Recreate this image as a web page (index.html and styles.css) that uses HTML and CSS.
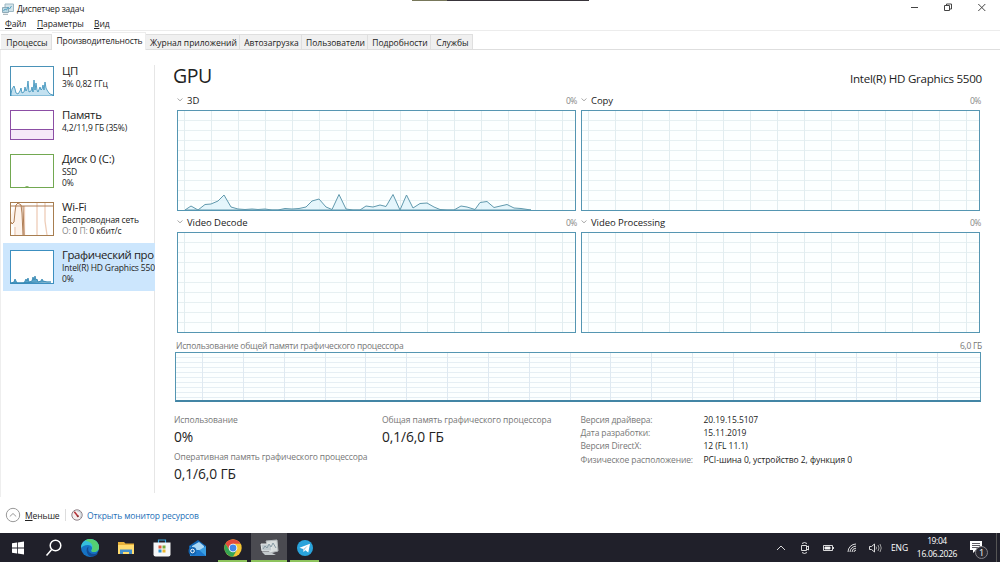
FILE: index.html
```html
<!DOCTYPE html>
<html lang="ru">

<head>
    <meta charset="UTF-8">
    <meta name="viewport" content="width=device-width, initial-scale=1.0">
    <title>Диспетчер задач</title>
    <link rel="stylesheet" href="styles.css">
</head>

<body>
    <div class="window">
        <div class="top_strip"></div>
        <div class="title_bar">
            <svg class="app_icon" viewBox="0 0 12 12">
                <path d="M3 1h8.500v7.500h-8.500z" fill="#d5e4ea" stroke="#9db8c4" />
                <path d="M.5 4.500h6v5h-6z" fill="#bcd9e4" stroke="#8fabb8" />
                <path d="M1.500 8l1.500-2 1.500 1 1.500-3 1.500 2 2-3" fill="none" stroke="#5ba5c4" />
                <path d="M1 11.300h5" stroke="#9aa9b0" />
            </svg>
            <span class="title">Диспетчер задач</span>
            <svg class="win_buttons" viewBox="0 0 80 12">
                <path d="M4 6.500h7" />
                <path d="M37.500 4.500h5v5h-5zM39.500 4.500v-1.500h5v5h-2" />
                <path d="M71.300 3l7 7M78.300 3l-7 7" />
            </svg>
        </div>
        <div class="menu_bar">
            <span class="menu_file"><u>Ф</u>айл</span>
            <span class="menu_options"><u>П</u>араметры</span>
            <span class="menu_view"><u>В</u>ид</span>
        </div>
        <div class="tabs">
            <div class="tab tab_processes">Процессы</div>
            <div class="tab tab_performance active">Производительность</div>
            <div class="tab tab_history">Журнал приложений</div>
            <div class="tab tab_startup">Автозагрузка</div>
            <div class="tab tab_users">Пользователи</div>
            <div class="tab tab_details">Подробности</div>
            <div class="tab tab_services">Службы</div>
        </div>

        <div class="content">
            <div class="sidebar">
                <div class="item">
                    <svg class="thumb short" viewBox="0 0 44 30">
                        <rect x=".5" y=".5" width="43" height="29" fill="#fff" stroke="#4a92b8" />
                        <path d="M1 28l1-5 2-3 1 3 1 4 2 1 2-3 1-3 1 5 2-1 1-5 1 4 1-2 1-8 1 11 2-1 1-4 1 5 1-12 1 10 1-7 1 7 1 2 2-5 1 3 1-1 1-4 1 5 1-8 1 6 1 2 2 3 1 1 3 1v1h-42z" fill="#c3e1f0" stroke="#318cb7" stroke-width=".8" />
                    </svg>
                    <div class="item_text">
                        <h3>ЦП</h3>
                        <p>3% 0,82 ГГц</p>
                    </div>
                </div>
                <div class="item">
                    <svg class="thumb short" viewBox="0 0 44 30">
                        <rect x=".5" y=".5" width="43" height="29" fill="#fff" stroke="#8c4ea5" />
                        <path d="M1 19.500h42v9.500h-42z" fill="#f5e9f8" />
                        <path d="M1 19.500h42" stroke="#8c4ea5" />
                    </svg>
                    <div class="item_text">
                        <h3>Память</h3>
                        <p>4,2/11,9 ГБ (35%)</p>
                    </div>
                </div>
                <div class="item tall">
                    <svg class="thumb" viewBox="0 0 44 34">
                        <rect x=".5" y=".5" width="43" height="33" fill="#fff" stroke="#72a851" />
                        <path d="M15 33.300l2-.8 2 .8" stroke="#72a851" fill="none" />
                    </svg>
                    <div class="item_text">
                        <h3>Диск 0 (C:)</h3>
                        <p>SSD</p>
                        <p>0%</p>
                    </div>
                </div>
                <div class="item tall network">
                    <svg class="thumb" viewBox="0 0 44 34">
                        <rect x=".5" y=".5" width="43" height="33" fill="#fff" stroke="#a77d50" />
                        <path d="M1 21V13l4-9 2-2h5l1 31H4V24z" fill="#fdf3ec" />
                        <path d="M14.500 4v29M27 1v32M35 1v18l2 14M5 25v8" fill="none" stroke="#eecdb8" stroke-width="1.300" />
                        <path d="M1 20l1 2 2-2 1-10 1-7 2-2 3 2 1 8 1 22M1 4h42M13 4l1 29" fill="none" stroke="#a66f43" stroke-width=".9" />
                    </svg>
                    <div class="item_text">
                        <h3>Wi-Fi</h3>
                        <p>Беспроводная сеть</p>
                        <p class="rates"><span>О:</span> 0 <span>П:</span> 0 кбит/с</p>
                    </div>
                </div>
                <div class="item tall selected">
                    <svg class="thumb" viewBox="0 0 44 34">
                        <rect x=".5" y=".5" width="43" height="33" fill="#fff" stroke="#3c8fc0" />
                        <path d="M1 33l3-1 1-3 1 2 1 2h7l2-4 1 2 1-3 1 4 3-1 1-4 1 3 1-4 1 4 1-1 1 3 3-1 1-2 1 2 4 1h4z" fill="#5aa4ca" stroke="#2d83ae" stroke-width=".8" />
                    </svg>
                    <div class="item_text">
                        <h3>Графический про</h3>
                        <p>Intel(R) HD Graphics 5500</p>
                        <p>0%</p>
                    </div>
                </div>
            </div>

            <div class="main">
                <div class="heading">
                    <h1>GPU</h1>
                    <span class="model">Intel(R) HD Graphics 5500</span>
                </div>
                <div class="engines">
                    <div class="engine">
                        <div class="engine_head">
                            <svg class="chevron" viewBox="0 0 6 4"><path d="M.5 .5l2.500 2.300 2.500-2.300" /></svg>
                            <span class="engine_name">3D</span><span class="percent">0%</span>
                        </div>
                        <div class="graph">
                            <svg class="graph_line" viewBox="0 0 397 99">
                                <path d="M7 99l6-4 7 4 7-5.500 6-.5 7-3 6-6 7 12 7 2 7 .5 7-.5 6 .5 7-.5 7 1h6l7-1.500 7 .5 7-.5 7-1.500 6-6 7-2 7 8 6 2.500 7-15 7 14.500 7 1h7l6-4 7 1 7-2 6 1.500 7-12 7 15.500 6.500-15 6.500 13 7-4.500 7-.5 7 4 6 2.500 7 .5h7l7-4 6 1 8 2.500 5-7 7-1 7 6 13-3 7 3.500 7 .5 10 1.500z" />
                            </svg>
                        </div>
                    </div>
                    <div class="engine">
                        <div class="engine_head">
                            <svg class="chevron" viewBox="0 0 6 4"><path d="M.5 .5l2.500 2.300 2.500-2.300" /></svg>
                            <span class="engine_name">Copy</span><span class="percent">0%</span>
                        </div>
                        <div class="graph"></div>
                    </div>
                    <div class="engine">
                        <div class="engine_head">
                            <svg class="chevron" viewBox="0 0 6 4"><path d="M.5 .5l2.500 2.300 2.500-2.300" /></svg>
                            <span class="engine_name">Video Decode</span><span class="percent">0%</span>
                        </div>
                        <div class="graph"></div>
                    </div>
                    <div class="engine">
                        <div class="engine_head">
                            <svg class="chevron" viewBox="0 0 6 4"><path d="M.5 .5l2.500 2.300 2.500-2.300" /></svg>
                            <span class="engine_name">Video Processing</span><span class="percent">0%</span>
                        </div>
                        <div class="graph"></div>
                    </div>
                </div>
                <div class="memory_head">
                    <span class="label memory_label">Использование общей памяти графического процессора</span>
                    <span class="label memory_max">6,0 ГБ</span>
                </div>
                <div class="memory_graph"></div>
                <div class="stats">
                    <div class="stats_left">
                        <div class="label">Использование</div>
                        <div class="value">0%</div>
                        <div class="label">Оперативная память графического процессора</div>
                        <div class="value">0,1/6,0 ГБ</div>
                    </div>
                    <div class="stats_mid">
                        <div class="label shared_label">Общая память графического процессора</div>
                        <div class="value">0,1/6,0 ГБ</div>
                    </div>
                    <div class="details">
                        <span class="label">Версия драйвера:</span><span>20.19.15.5107</span>
                        <span class="label">Дата разработки:</span><span>15.11.2019</span>
                        <span class="label">Версия DirectX:</span><span>12 (FL 11.1)</span>
                        <span class="label">Физическое расположение:</span><span>PCI-шина 0, устройство 2, функция 0</span>
                    </div>
                </div>
            </div>
        </div>

        <div class="footer">
            <svg class="less_icon" viewBox="0 0 16 16">
                <circle cx="8" cy="8" r="6.700" />
                <path d="M4.800 9.500l3.200-3 3.200 3" />
            </svg>
            <span class="less"><u>М</u>еньше</span>
            <span class="divider"></span>
            <svg class="monitor_icon" viewBox="0 0 12 12">
                <circle cx="6" cy="6" r="5.200" fill="#f5eeee" stroke="#8c7f86" />
                <path d="M6 1.800a4.200 4.200 0 0 1 3 7.200" fill="none" stroke="#b9c6ce" />
                <path d="M3.300 2.800l4 5" stroke="#b52f35" stroke-width="1.500" />
                <circle cx="6.800" cy="7.300" r="1" fill="#8c3438" />
            </svg>
            <a class="monitor_link">Открыть монитор ресурсов</a>
        </div>
    </div>

    <div class="taskbar">
        <div class="task">
            <svg viewBox="0 0 20 20"><path d="M4 5.300l5-.7v5H4zM9.800 4.500l6.200-.9v6H9.800zM4 10.400h5v5l-5-.7zM9.800 10.400H16v6l-6.200-.9z" fill="#fff" /></svg>
        </div>
        <div class="task search">
            <svg viewBox="0 0 20 20" fill="none" stroke="#fff" stroke-width="1.500"><circle cx="11.500" cy="7.500" r="5.300" /><path d="M7.700 11.500L2.500 17.500" /></svg>
        </div>
        <div class="task">
            <svg viewBox="0 0 20 20">
                <circle cx="10" cy="10" r="9" fill="#1673c5" />
                <path d="M1 10C1 4.500 5 1 10 1c5.500 0 9 4 9 8 0 3.500-2.500 5-5 5-2 0-3-.8-2.500-1.800C13 10 11.500 7 8 7c-3.500 0-6 1.500-7 3z" fill="#35bedb" />
                <path d="M10 1c5.500 0 9 4 9 8 0 3.500-2.500 5-5 5-2 0-3-.8-2.500-1.800C14 8 12 3.500 5 2.700 6.500 1.500 8 1 10 1z" fill="#55cf72" />
                <path d="M8.500 8.500C5 10.500 6.500 18 12 18.800 15 18.500 17 17 18 15c-4 2-9.500.8-9.800-3.500 0-1.500.3-2 .3-3z" fill="#124b93" />
            </svg>
        </div>
        <div class="task">
            <svg viewBox="0 0 20 20">
                <path d="M2 4h6l1.500 1.500H18V16H2z" fill="#e8b23b" />
                <path d="M2 7h16v9H2z" fill="#ffdc70" />
                <path d="M4 16v-4.500h12V16h-3v-2H7v2z" fill="#4590cc" />
            </svg>
        </div>
        <div class="task">
            <svg viewBox="0 0 20 20">
                <path d="M6.500 5V2h7v3" fill="none" stroke="#39a6da" stroke-width="1.200" />
                <path d="M1.500 4.500h17v12q0 2-2 2h-13q-2 0-2-2z" fill="#f5f7f8" />
                <path d="M6.500 7.500h3v3h-3z" fill="#e35a3d" /><path d="M10.500 7.500h3v3h-3z" fill="#77ad3b" />
                <path d="M6.500 11.500h3v3h-3z" fill="#2b91cd" /><path d="M10.500 11.500h3v3h-3z" fill="#ebb62c" />
            </svg>
        </div>
        <div class="task">
            <svg viewBox="0 0 20 20">
                <path d="M2 8l9-6 8 6v10H3z" fill="#1267b4" />
                <path d="M5 8l7-4 5 4v4H5z" fill="#a9d8f5" />
                <path d="M3 8l8 5 8-5v10H3z" fill="#3a9ee3" />
                <path d="M3 18l9-6 7 6z" fill="#1c78ce" />
                <circle cx="5.500" cy="13" r="4" fill="#1264b0" />
                <circle cx="5.500" cy="13" r="1.800" fill="none" stroke="#fff" />
            </svg>
        </div>
        <div class="task open">
            <svg viewBox="0 0 20 20">
                <circle cx="10" cy="10" r="8.700" fill="#f4c534" />
                <path d="M2.500 5.700A8.700 8.700 0 0 1 17.500 5.700H10L6.300 12z" fill="#e34b3d" />
                <path d="M2.500 5.700A8.700 8.700 0 0 0 10 18.700l3.700-6.500L6.300 12z" fill="#36a553" />
                <circle cx="10" cy="10" r="4.300" fill="#fff" /><circle cx="10" cy="10" r="3.400" fill="#4286e8" />
            </svg>
        </div>
        <div class="task open current">
            <svg viewBox="0 0 20 20">
                <path d="M7 3l11-1 1 11-8 2z" fill="#d8dddd" stroke="#b3b9bb" />
                <path d="M2 6h10l1 7H3z" fill="#c0c9cd" stroke="#e4e8e9" />
                <path d="M4 11l2-3 2 2 2-4 2 3 2-4 3 5" fill="none" stroke="#879ba5" />
                <path d="M3 14h8l6 3H6z" fill="#c4cacc" />
            </svg>
        </div>
        <div class="task open">
            <svg viewBox="0 0 20 20"><circle cx="10" cy="10" r="8" fill="#29a3db" /><path d="M4.500 9.800L15 5.700l-1.700 8.800-3-2.200-1.700 1.600-.5-3z" fill="#fff" /><path d="M8.100 10.900l4.900-3.500-3.500 4.300-.9 2.200z" fill="#a9cde0" /></svg>
        </div>

        <div class="tray">
            <svg class="tray_icons" viewBox="0 0 108 16">
                <path d="M3 10l4-4 4 4" />
                <path d="M27.500 5.500h5v5h-5zM32.500 7l2-1v4l-2-1M28 3.500q2.500-2 5 0M28 12.500q2.500 2 5 0" />
                <path d="M49.500 5.500h9v5h-9zM59.500 7v2" /><path d="M51 7h5v2h-5z" fill="#fff" />
                <path d="M74 12a8 8 0 0 1 8-8M76 12a6 6 0 0 1 6-5.800M78 12a4 4 0 0 1 4-3.800M80 12a2 2 0 0 1 2-1.800" />
                <path d="M95.500 6.500h2l3-2.500v8l-3-2.500h-2z" /><path d="M102 6.500q1 1.500 0 3M104 5q2 3 0 6M106 4q2.500 4 0 8" stroke="#aaa" />
            </svg>
            <span class="lang">ENG</span>
            <div class="clock"><span class="time">19:04</span><span class="date">16.06.2026</span></div>
            <div class="notify">
                <svg viewBox="0 0 14 14"><path d="M1 1h12v9H7l-3 3v-3H1z" fill="#fff" /><path d="M3 3.500h8M3 5.500h8M3 7.500h6" stroke="#33313a" stroke-width=".8" /></svg>
                <span class="badge">1</span>
            </div>
        </div>
    </div>
</body>

</html>
```

FILE: styles.css
```css
* {
    margin: 0;
    padding: 0;
    box-sizing: border-box;
}

body {
    width: 1000px;
    height: 562px;
    overflow: hidden;
    background-color: white;
    font-family: "Open Sans", "Noto Sans", sans-serif;
    font-size: 8.5px;
    color: #222;
    white-space: nowrap;
}

svg {
    display: block;
    flex: none;
}

u {
    text-underline-offset: 1px;
}

.window {
    height: 533px;
    display: flex;
    flex-direction: column;
}

.top_strip {
    width: 177px;
    height: 1px;
    margin-left: 412px;
    background: linear-gradient(90deg, #77775a 35px, #38343a 35px);
}

/* title and menu */
.title_bar {
    height: 17px;
    display: flex;
    align-items: center;
    padding: 0 13px 2px 2px;
}

.app_icon {
    width: 12px;
    height: 12px;
    margin-right: 3px;
}

.title {
    letter-spacing: -0.2px;
}

.win_buttons {
    width: 80px;
    height: 12px;
    margin: -3px 0 0 auto;
    fill: none;
    stroke: #444;
}

.menu_bar {
    height: 13px;
    display: flex;
    align-items: center;
    padding: 0 0 1px 5px;
    border-bottom: 1px solid #ececec;
    letter-spacing: -0.1px;
}

.menu_file {
    width: 32px;
}

.menu_options {
    width: 57px;
}

.tabs {
    height: 19px;
    display: flex;
    align-items: flex-end;
    padding-left: 1px;
    border-bottom: 1px solid #dedede;
}

.tab {
    height: 15px;
    line-height: 15px;
    padding-left: 2px;
    text-align: center;
    background-color: #f0f0f0;
    border: 1px solid #dfdfdf;
    border-width: 1px 1px 0 0;
}

.tab.active {
    height: 18px;
    line-height: 15px;
    margin-bottom: -1px;
    background-color: white;
    border-color: #ededed;
    letter-spacing: -0.15px;
}

.tab_processes {
    width: 51px;
}

.tab_performance,
.tab_history {
    width: 94px;
}

.tab_startup {
    width: 62px;
}

.tab_users {
    width: 66px;
}

.tab_details {
    width: 63px;
}

.tab_services {
    width: 42px;
}

/* left column */
.content {
    height: 447px;
    display: flex;
}

.sidebar {
    width: 156px;
    padding: 8px 0 0 2px;
    border-left: 1px solid #eee;
    background: linear-gradient(#e6e6e6, #e6e6e6) 153px 15px / 1px 428px no-repeat;
}

.item {
    width: 152px;
    height: 44px;
    padding: 8px 0 0 7px;
    display: flex;
    overflow: hidden;
}

.item.tall {
    height: 48px;
}

.item.network {
    height: 49px;
}

.item.selected {
    padding-top: 7px;
    background-color: #cce6fd;
}

.thumb {
    width: 44px;
    height: 34px;
    margin-right: 8px;
}

.thumb.short {
    height: 30px;
}

.item_text {
    margin-top: -2px;
}

.item h3 {
    font-size: 11.4px;
    font-weight: normal;
    line-height: 13px;
    margin-bottom: 1px;
    letter-spacing: -0.3px;
}

.item.selected h3 {
    letter-spacing: -0.4px;
}

.item p {
    line-height: 11px;
    font-size: 8.5px;
    letter-spacing: -0.15px;
}

.rates span {
    color: #888;
}

/* graphs */
.main {
    width: 844px;
    padding: 0 18px 0 19px;
}

.heading {
    height: 42px;
    padding-top: 12px;
    display: flex;
    justify-content: space-between;
}

.heading h1 {
    margin-left: -2px;
    font-size: 19.5px;
    line-height: 28px;
    font-weight: normal;
    letter-spacing: -0.4px;
}

.model {
    font-size: 11.6px;
    line-height: 34px;
    letter-spacing: -0.25px;
}

.engines {
    display: grid;
    grid-template-columns: 399px 399px;
    column-gap: 5px;
    row-gap: 3px;
    padding-left: 2px;
}

.engine_head {
    height: 18px;
    display: flex;
    align-items: center;
    padding-bottom: 2px;
    font-size: 9.5px;
    letter-spacing: -0.05px;
}

.chevron {
    width: 6px;
    height: 4px;
    margin: 0 4px 0 0;
    fill: none;
    stroke: #aaa;
}

.percent {
    margin-left: auto;
    margin-right: -1px;
    color: #888;
    font-size: 8.5px;
    letter-spacing: -0.4px;
}

.graph {
    height: 101px;
    border: 1px solid #5596b2;
    background:
        repeating-linear-gradient(90deg, #e2edf0 0 1px, transparent 1px 27px) 6px 0 / 400px 100% no-repeat,
        repeating-linear-gradient(transparent 0 9px, #e6f0f2 9px 10px),
        #fcffff;
}

.graph_line {
    width: 397px;
    height: 99px;
    fill: rgba(222, 243, 251, 0.75);
    stroke: #6099ad;
}

.memory_head {
    display: flex;
    justify-content: space-between;
    height: 19px;
    padding-left: 1px;
    line-height: 26px;
}

.label {
    color: #777;
    font-size: 8.5px;
    letter-spacing: -0.12px;
}

.memory_label {
    letter-spacing: -0.22px;
}

.memory_max {
    letter-spacing: -0.3px;
}

.memory_graph {
    width: 806px;
    height: 50px;
    border: 1px solid #5596b2;
    border-bottom: 2px solid #4385a5;
    background:
        repeating-linear-gradient(90deg, #dfe9f1 0 1px, transparent 1px 40.85px) 26px 0 / 770px 100% no-repeat,
        repeating-linear-gradient(transparent 0 4px, #e6eff4 4px 5px),
        #fcffff;
}

/* statistics under the graphs */
.stats {
    display: flex;
    padding-top: 11px;
    margin-left: -1px;
}

.stats_left {
    width: 208px;
}

.stats_mid {
    width: 198px;
}

.stats .label {
    line-height: 14px;
}

.stats .shared_label {
    letter-spacing: -0.06px;
}

.value {
    font-size: 13.8px;
    line-height: 20px;
    height: 23px;
    letter-spacing: -0.1px;
}

.details {
    display: grid;
    grid-template-columns: 123px auto;
    grid-auto-rows: 13.2px;
    align-self: flex-start;
    line-height: 14px;
    letter-spacing: -0.05px;
    padding-left: 0.5px;
}

/* footer */
.footer {
    height: 36px;
    display: flex;
    align-items: center;
    padding-left: 5px;
    letter-spacing: -0.1px;
}

.less_icon {
    width: 16px;
    height: 16px;
    margin-right: 4px;
    fill: none;
    stroke: #999;
}

.less {
    width: 35px;
}

.divider {
    width: 1px;
    height: 12px;
    margin: 0 5px;
    background-color: #ddd;
}

.monitor_icon {
    width: 12px;
    height: 12px;
    margin-right: 4px;
}

.monitor_link {
    color: #2470b8;
}

/* taskbar */
.taskbar {
    height: 29px;
    display: flex;
    background-color: #20202a;
    color: white;
}

.task {
    width: 35.9px;
    height: 29px;
    display: flex;
    justify-content: center;
    padding-top: 5px;
}

.task svg {
    width: 20px;
    height: 20px;
}

.task.open {
    background: linear-gradient(#8dc35d, #8dc35d) 3px 27px / 29px 2px no-repeat;
}

.task.current {
    background: linear-gradient(#8dc35d, #8dc35d) 0 27px / 36px 2px no-repeat, #4b4b51;
}

.tray {
    margin-left: auto;
    width: 226px;
    display: flex;
    align-items: center;
}

.tray_icons {
    width: 108px;
    height: 16px;
    fill: none;
    stroke: #eee;
    stroke-width: 0.9;
}

.lang {
    width: 17px;
    margin-left: 9px;
    letter-spacing: -0.1px;
}

.clock {
    width: 40px;
    margin-left: 9px;
    display: flex;
    flex-direction: column;
    align-items: center;
    line-height: 13px;
    letter-spacing: -0.4px;
    padding-bottom: 2px;
}

.date {
    letter-spacing: -0.3px;
}

.notify {
    position: relative;
    width: 31px;
    height: 29px;
    margin-left: 9px;
    padding: 7px 0 0 3px;
    border-right: 1px solid #555;
}

.notify svg {
    width: 14px;
    height: 14px;
}

.badge {
    position: absolute;
    left: 9px;
    top: 13px;
    width: 13px;
    height: 13px;
    border: 1px solid #85848a;
    border-radius: 50%;
    background-color: #2a2932;
    font-size: 9px;
    line-height: 11px;
    text-align: center;
}
```
